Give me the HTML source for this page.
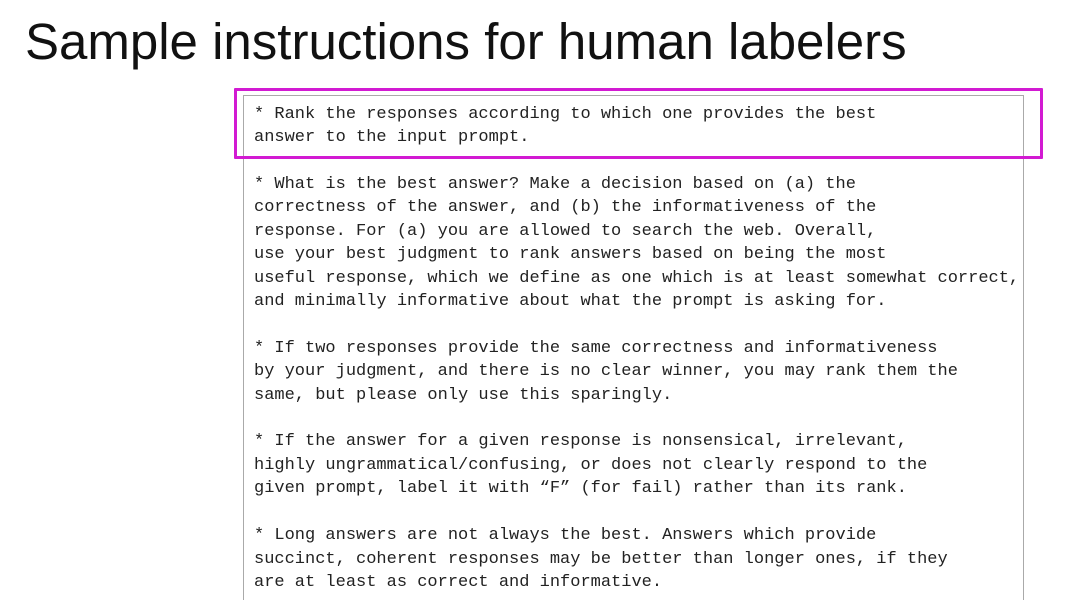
<!DOCTYPE html>
<html><head><meta charset="utf-8"><style>
html,body{margin:0;padding:0;background:#fff;width:1076px;height:600px;overflow:hidden;position:relative}
h1{position:absolute;left:25px;top:11px;margin:0;font:400 51px/62px "Liberation Sans",sans-serif;color:#111;letter-spacing:0px}
.box{position:absolute;left:243px;top:95px;width:779px;height:520px;border:1px solid #aaa;border-bottom:none}
.hl{position:absolute;left:234px;top:88px;width:803px;height:65px;border:3px solid #d21ad2;border-radius:1px}
pre{position:absolute;left:254px;margin:0;font:17px/23.4px "Liberation Mono",monospace;color:#222}
</style></head><body>
<h1>Sample instructions for human labelers</h1>
<div class="box"></div>
<pre style="top:103px">* Rank the responses according to which one provides the best
answer to the input prompt.</pre>
<pre style="top:173px">* What is the best answer? Make a decision based on (a) the
correctness of the answer, and (b) the informativeness of the
response. For (a) you are allowed to search the web. Overall,
use your best judgment to rank answers based on being the most
useful response, which we define as one which is at least somewhat correct,
and minimally informative about what the prompt is asking for.

* If two responses provide the same correctness and informativeness
by your judgment, and there is no clear winner, you may rank them the
same, but please only use this sparingly.

* If the answer for a given response is nonsensical, irrelevant,
highly ungrammatical/confusing, or does not clearly respond to the
given prompt, label it with “F” (for fail) rather than its rank.

* Long answers are not always the best. Answers which provide
succinct, coherent responses may be better than longer ones, if they
are at least as correct and informative.</pre>
<div class="hl"></div>
</body></html>
